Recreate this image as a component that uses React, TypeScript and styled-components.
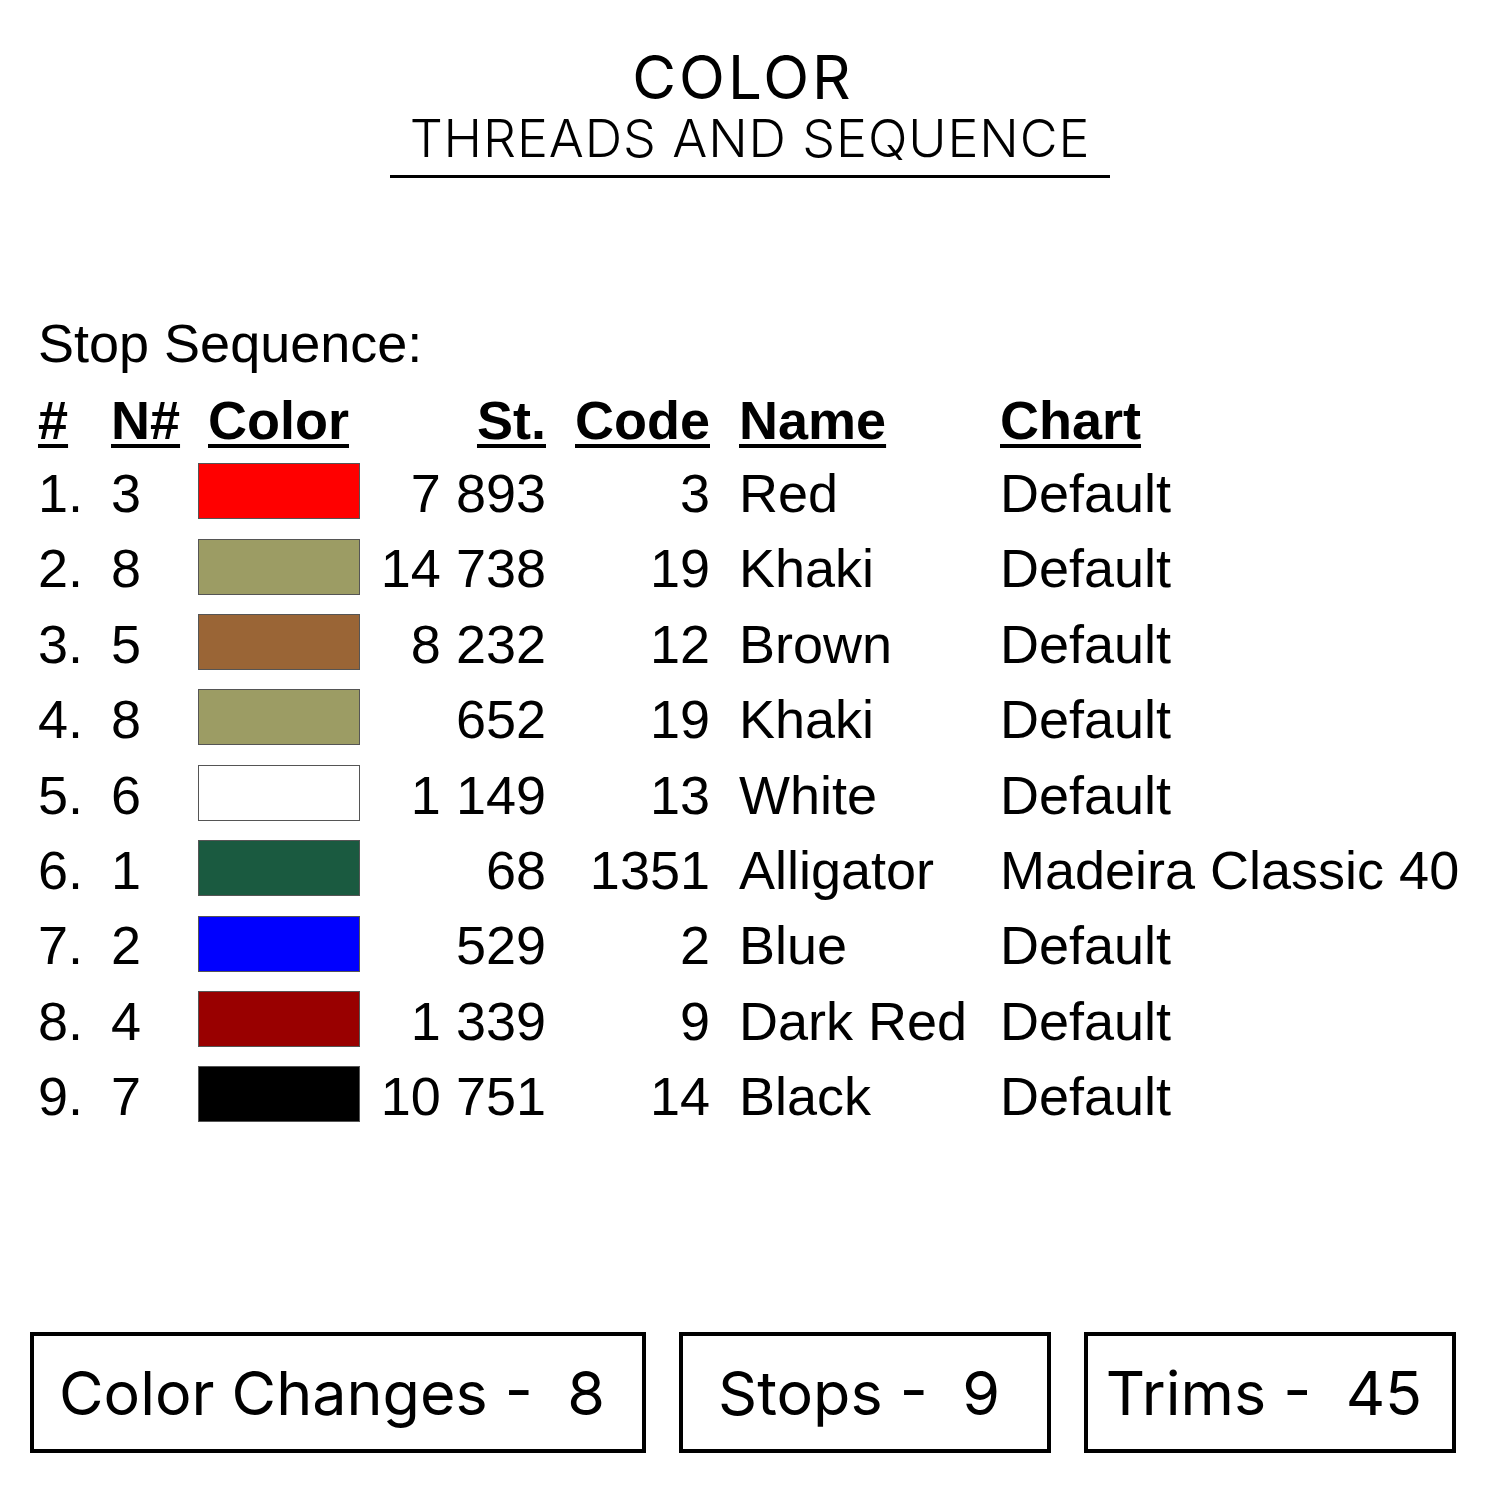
import React from "react";
import styled, { createGlobalStyle } from "styled-components";

type Stop = {
  no: number;
  needle: number;
  color: string;
  stitches: string;
  code: string;
  name: string;
  chart: string;
};

const stops: Stop[] = [
  { no: 1, needle: 3, color: "#ff0000", stitches: "7 893", code: "3", name: "Red", chart: "Default" },
  { no: 2, needle: 8, color: "#9c9c64", stitches: "14 738", code: "19", name: "Khaki", chart: "Default" },
  { no: 3, needle: 5, color: "#9a6536", stitches: "8 232", code: "12", name: "Brown", chart: "Default" },
  { no: 4, needle: 8, color: "#9c9c64", stitches: "652", code: "19", name: "Khaki", chart: "Default" },
  { no: 5, needle: 6, color: "#ffffff", stitches: "1 149", code: "13", name: "White", chart: "Default" },
  { no: 6, needle: 1, color: "#1a5a40", stitches: "68", code: "1351", name: "Alligator", chart: "Madeira Classic 40" },
  { no: 7, needle: 2, color: "#0000ff", stitches: "529", code: "2", name: "Blue", chart: "Default" },
  { no: 8, needle: 4, color: "#990000", stitches: "1 339", code: "9", name: "Dark Red", chart: "Default" },
  { no: 9, needle: 7, color: "#000000", stitches: "10 751", code: "14", name: "Black", chart: "Default" },
];

const stats = [
  { label: "Color Changes", value: "8", wide: true },
  { label: "Stops", value: "9", wide: false },
  { label: "Trims", value: "45", wide: false },
];

const App = (): JSX.Element => {
  return (
    <Page>
      <GlobalStyle />
      <Header>
        <Title>COLOR</Title>
        <Subtitle>THREADS AND SEQUENCE</Subtitle>
      </Header>

      <Section>
        <SectionLabel>Stop Sequence:</SectionLabel>
        <Table>
          <HeadCell>#</HeadCell>
          <HeadCell>N#</HeadCell>
          <HeadCell $shift="10px">Color</HeadCell>
          <HeadCell $right>St.</HeadCell>
          <HeadCell $right>Code</HeadCell>
          <HeadCell $shift="29px">Name</HeadCell>
          <HeadCell>Chart</HeadCell>

          {stops.map((s) => (
            <React.Fragment key={s.no}>
              <Cell>{s.no}.</Cell>
              <Cell>{s.needle}</Cell>
              <SwatchCell>
                <Swatch $color={s.color} />
              </SwatchCell>
              <Cell $right>{s.stitches}</Cell>
              <Cell $right>{s.code}</Cell>
              <Cell $shift="29px">{s.name}</Cell>
              <Cell>{s.chart}</Cell>
            </React.Fragment>
          ))}
        </Table>
      </Section>

      <StatRow>
        {stats.map((s) => (
          <StatBox key={s.label} $wide={s.wide}>
            {s.label} -  {s.value}
          </StatBox>
        ))}
      </StatRow>
    </Page>
  );
};

export default App;

const GlobalStyle = createGlobalStyle`
  body {
    margin: 0;
    background: #ffffff;
    color: #000000;
  }
`;

const Page = styled.div`
  width: 1500px;
  height: 1500px;
  box-sizing: border-box;
  display: flex;
  flex-direction: column;
  background: #ffffff;
`;

const Header = styled.header`
  display: flex;
  flex-direction: column;
  align-items: center;
  padding-top: 47px;
  font-family: Inter, "Noto Sans", sans-serif;
`;

const Title = styled.div`
  font-size: 60px;
  line-height: 60px;
  font-weight: 400;
  letter-spacing: 3px;
  margin-right: 14px;
  color: #000;
`;

const Subtitle = styled.div`
  margin-top: 6px;
  font-size: 52px;
  line-height: 52px;
  font-weight: 300;
  letter-spacing: 0.9px;
  color: #000;
  padding: 0 20px 10px;
  border-bottom: 3px solid #000;
`;

const Section = styled.section`
  margin-top: 128px;
  padding-left: 38px;
  font-family: "Liberation Sans", Arial, sans-serif;
  font-size: 54px;
  color: #000;
`;

const SectionLabel = styled.div`
  line-height: 75.4px;
  margin-bottom: 2.6px;
`;

const Table = styled.div`
  display: grid;
  grid-template-columns: 73px 87px 162px 186px 164px 290px auto;
  grid-template-rows: 72px;
  grid-auto-rows: 75.4px;
  justify-content: start;
`;

const Cell = styled.div<{ $right?: boolean; $shift?: string }>`
  line-height: 75.4px;
  white-space: nowrap;
  text-align: ${(p) => (p.$right ? "right" : "left")};
  padding-left: ${(p) => p.$shift ?? "0"};
`;

const HeadCell = styled(Cell)`
  line-height: 72px;
  font-weight: bold;
  text-decoration: underline;
  text-decoration-thickness: 4px;
  text-underline-offset: 5px;
`;

const SwatchCell = styled.div`
  display: flex;
  align-items: center;
  padding-bottom: 5px;
`;

const Swatch = styled.div<{ $color: string }>`
  width: 160px;
  height: 54px;
  background: ${(p) => p.$color};
  border: 1px solid #555;
`;

const StatRow = styled.div`
  margin-top: auto;
  margin-bottom: 47px;
  padding-left: 30px;
  display: flex;
  gap: 33px;
  font-family: Inter, "Noto Sans", sans-serif;
`;

const StatBox = styled.div<{ $wide: boolean }>`
  width: ${(p) => (p.$wide ? "616px" : "372px")};
  height: 121px;
  box-sizing: border-box;
  border: 4px solid #000;
  padding-right: 12px;
  display: flex;
  align-items: center;
  justify-content: center;
  white-space: pre;
  font-size: 61px;
  color: #000;
`;
